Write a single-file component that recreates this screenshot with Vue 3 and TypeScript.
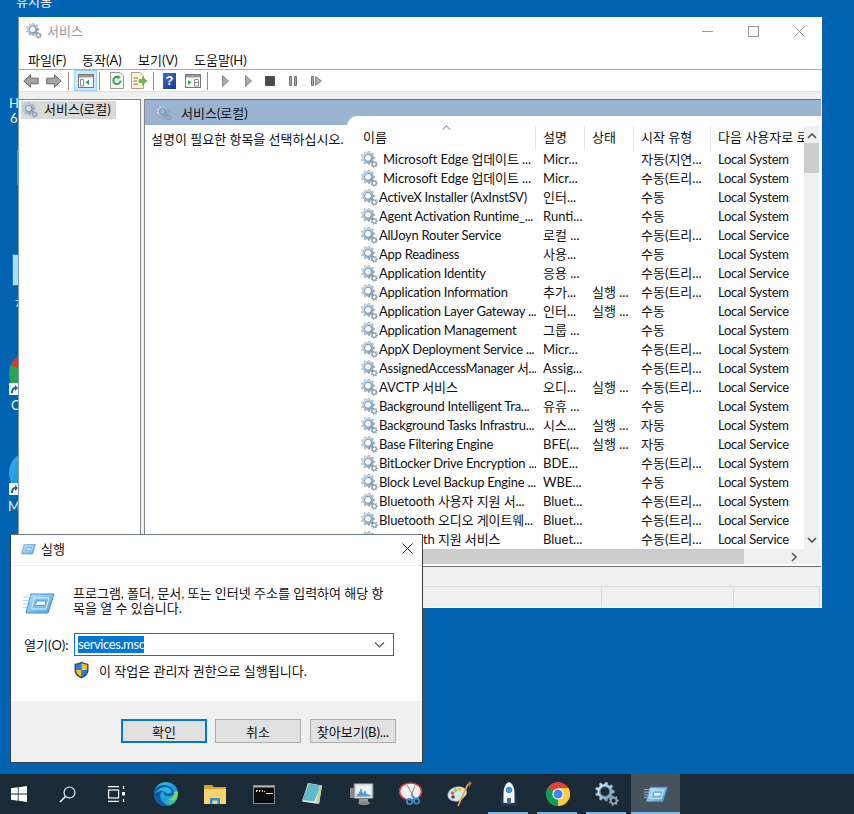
<script setup lang="ts">
interface Row {
  name: string
  desc: string
  state?: string
  start: string
  user: string
  indent?: boolean
}

const SYS = 'Local System'
const SVC = 'Local Service'
const TRIG = '수동(트리...'

const rows: Row[] = [
  { name: 'Microsoft Edge 업데이트 ...', desc: 'Micr...', start: '자동(지연...', user: SYS, indent: true },
  { name: 'Microsoft Edge 업데이트 ...', desc: 'Micr...', start: TRIG, user: SYS, indent: true },
  { name: 'ActiveX Installer (AxInstSV)', desc: '인터...', start: '수동', user: SYS },
  { name: 'Agent Activation Runtime_...', desc: 'Runti...', start: '수동', user: SYS },
  { name: 'AllJoyn Router Service', desc: '로컬 ...', start: TRIG, user: SVC },
  { name: 'App Readiness', desc: '사용...', start: '수동', user: SYS },
  { name: 'Application Identity', desc: '응용 ...', start: TRIG, user: SVC },
  { name: 'Application Information', desc: '추가...', state: '실행 ...', start: TRIG, user: SYS },
  { name: 'Application Layer Gateway ...', desc: '인터...', state: '실행 ...', start: '수동', user: SVC },
  { name: 'Application Management', desc: '그룹 ...', start: '수동', user: SYS },
  { name: 'AppX Deployment Service ...', desc: 'Micr...', start: TRIG, user: SYS },
  { name: 'AssignedAccessManager 서...', desc: 'Assig...', start: TRIG, user: SYS },
  { name: 'AVCTP 서비스', desc: '오디...', state: '실행 ...', start: TRIG, user: SVC },
  { name: 'Background Intelligent Tra...', desc: '유휴 ...', start: '수동', user: SYS },
  { name: 'Background Tasks Infrastru...', desc: '시스...', state: '실행 ...', start: '자동', user: SYS },
  { name: 'Base Filtering Engine', desc: 'BFE(...', state: '실행 ...', start: '자동', user: SVC },
  { name: 'BitLocker Drive Encryption ...', desc: 'BDE...', start: TRIG, user: SYS },
  { name: 'Block Level Backup Engine ...', desc: 'WBE...', start: '수동', user: SYS },
  { name: 'Bluetooth 사용자 지원 서...', desc: 'Bluet...', start: TRIG, user: SYS },
  { name: 'Bluetooth 오디오 게이트웨...', desc: 'Bluet...', start: TRIG, user: SVC },
  { name: 'Bluetooth 지원 서비스', desc: 'Bluet...', start: TRIG, user: SVC },
]

const menus = ['파일(F)', '동작(A)', '보기(V)', '도움말(H)']

// latin runs come out a bit wide, hangul ones do not
function isLatin(s: string): boolean {
  return (s.match(/[\uac00-\ud7a3]/g) ?? []).length < 2
}

// toothed ring used by the services icon
function gearPath(cx: number, cy: number, r: number, teeth: number, hole: number): string {
  const pts: string[] = []
  const step = (Math.PI * 2) / teeth
  for (let i = 0; i < teeth; i++) {
    const a = i * step
    const corners: [number, number][] = [
      [a - step * 0.3, r * 0.78],
      [a - step * 0.16, r],
      [a + step * 0.16, r],
      [a + step * 0.3, r * 0.78],
    ]
    for (const [t, d] of corners) {
      pts.push(`${(cx + Math.cos(t) * d).toFixed(2)} ${(cy + Math.sin(t) * d).toFixed(2)}`)
    }
  }
  const ring = `M${cx - hole} ${cy}a${hole} ${hole} 0 1 0 ${hole * 2} 0a${hole} ${hole} 0 1 0 ${-hole * 2} 0z`
  return `M${pts.join('L')}z${ring}`
}

const bigGear = gearPath(7.4, 7.2, 7.2, 9, 3.6)
const smallGear = gearPath(14, 14, 3.8, 7, 1.5)
</script>

<template>
  <div class="desktop">
    <!-- shared icons -->
    <svg class="defs" aria-hidden="true">
      <defs>
        <linearGradient id="gearFill" x1="0" y1="0" x2="1" y2="1">
          <stop offset="0" stop-color="#e6f0f8" />
          <stop offset="0.55" stop-color="#a6c3da" />
          <stop offset="1" stop-color="#607f9c" />
        </linearGradient>
        <linearGradient id="runFill" x1="0" y1="0" x2="1" y2="1">
          <stop offset="0" stop-color="#bfe3fb" />
          <stop offset="1" stop-color="#4aa0e0" />
        </linearGradient>
        <symbol id="gears" viewBox="0 0 18 18">
          <path :d="bigGear" fill="url(#gearFill)" fill-rule="evenodd" stroke="#7b97b0" stroke-width="0.4" />
          <circle cx="7.4" cy="7.2" r="3.7" fill="none" stroke="#5d7a96" stroke-width="0.6" />
          <path :d="smallGear" fill="#8ea1b3" fill-rule="evenodd" />
        </symbol>
        <symbol id="run" viewBox="0 0 32 24">
          <path d="M8 3H31L25 22H3z" fill="url(#runFill)" stroke="#3f93d6" stroke-width="1" />
          <path d="M11.5 7H26L23 18H8.5z" fill="#7cbdee" stroke="#d9f0ff" stroke-width="1" />
          <path d="M13.5 10H23L22 14.5H12.5z" fill="#eef8ff" stroke="#3f93d6" stroke-width="0.8" />
          <path d="M0 6H7M0 9.5H6M0 13H5M0 16.5H4" stroke="#a9d6f5" stroke-width="1" />
        </symbol>
        <symbol id="link" viewBox="0 0 10 12">
          <rect width="10" height="12" fill="#f4f4f4" />
          <path d="M2 10C2 6 4 4 6 4V2L9 5L6 8V6C4.5 6 4 8 4 10z" fill="#2a5c9c" />
        </symbol>
      </defs>
    </svg>

    <!-- what shows of the desktop shortcuts -->
    <div class="desk-label recycle">휴지통</div>
    <div class="desk-label l-h">H</div>
    <div class="desk-label l-6">6</div>
    <div class="desk-sliver"></div>
    <div class="desk-note"></div>
    <div class="desk-label l-7">7</div>
    <div class="desk-chrome"></div>
    <svg class="desk-link chrome-link"><use href="#link" /></svg>
    <div class="desk-label l-c">C</div>
    <div class="desk-edge"></div>
    <svg class="desk-link edge-link"><use href="#link" /></svg>
    <div class="desk-label l-m">M</div>

    <!-- services.msc -->
    <section class="services">
      <header class="svc-title">
        <svg class="title-icon"><use href="#gears" /></svg>
        <span class="title-text">서비스</span>
        <div class="win-btns">
          <svg width="11" height="11" viewBox="0 0 11 11"><path d="M0 5.5H11" stroke="#999" /></svg>
          <svg width="11" height="11" viewBox="0 0 11 11"><rect x="0.5" y="0.5" width="10" height="10" fill="none" stroke="#999" /></svg>
          <svg width="11" height="11" viewBox="0 0 11 11"><path d="M0.5 0.5L10.5 10.5M10.5 0.5L0.5 10.5" stroke="#999" /></svg>
        </div>
      </header>

      <nav class="menubar">
        <span v-for="m in menus" :key="m">{{ m }}</span>
      </nav>

      <div class="toolbar">
        <svg class="ml0" width="16" height="14" viewBox="0 0 16 14"><path d="M7.5 0.8L0.8 7L7.5 13.2V9.8H15.2V4.2H7.5z" fill="#a4a4a4" stroke="#6a6a6a" /></svg>
        <svg class="ml7" width="16" height="14" viewBox="0 0 16 14"><path d="M8.5 0.8L15.2 7L8.5 13.2V9.8H0.8V4.2H8.5z" fill="#a4a4a4" stroke="#6a6a6a" /></svg>
        <i class="tb-sep ml6"></i>
        <div class="tb-active ml5">
          <svg width="16" height="14" viewBox="0 0 16 14">
            <rect x="0.5" y="0.5" width="15" height="13" fill="#fff" stroke="#777" />
            <rect x="1" y="1" width="14" height="2.5" fill="#9a9a9a" />
            <path d="M2.5 5.5H5.5V12H2.5z" fill="none" stroke="#8a8a8a" />
            <path d="M11 5.5V11L7.5 8.2z" fill="#2fa84f" />
          </svg>
        </div>
        <i class="tb-sep ml2"></i>
        <svg class="ml10" width="14" height="17" viewBox="0 0 14 17">
          <path d="M0.5 0.5H10L13.5 4V16.5H0.5z" fill="#f7f7f7" stroke="#9a9a9a" />
          <path d="M10.5 8.5A3.6 3.6 0 1 1 8.8 5.4" fill="none" stroke="#35a84a" stroke-width="2" />
          <path d="M7 3L10.8 5.2L7.6 7.6z" fill="#35a84a" />
        </svg>
        <svg class="ml7" width="16" height="17" viewBox="0 0 16 17">
          <path d="M0.5 0.5H9L12.5 4V16.5H0.5z" fill="#fbf3d0" stroke="#a8a08a" />
          <path d="M2.5 6H7M2.5 9H6M2.5 12H7" stroke="#777" />
          <path d="M8 7.5H11.5V5L16 9L11.5 13V10.5H8z" fill="#5fc24a" stroke="#3b9a34" stroke-width="0.5" />
        </svg>
        <i class="tb-sep ml6"></i>
        <div class="tb-help ml9">?</div>
        <svg class="ml9" width="16" height="14" viewBox="0 0 16 14">
          <rect x="0.5" y="0.5" width="15" height="13" fill="#fff" stroke="#777" />
          <rect x="1" y="1" width="14" height="2.5" fill="#9a9a9a" />
          <path d="M3 6V11L6.5 8.5z" fill="#2fa84f" />
          <path d="M9.5 5.5H13.5V12H9.5zM9.5 8.5H13.5" fill="none" stroke="#8a8a8a" />
        </svg>
        <i class="tb-sep ml6"></i>
        <svg class="ml14" width="7" height="12" viewBox="0 0 7 12"><path d="M0.5 0.5L6.5 6L0.5 11.5z" fill="#aaa" stroke="#8a8a8a" /></svg>
        <svg class="ml16" width="7" height="12" viewBox="0 0 7 12"><path d="M0.5 0.5L6.5 6L0.5 11.5z" fill="#aaa" stroke="#8a8a8a" /></svg>
        <svg class="ml13" width="10" height="10" viewBox="0 0 10 10"><rect width="10" height="10" rx="1" fill="#4a4a4a" /></svg>
        <svg class="ml14" width="8" height="10" viewBox="0 0 8 10"><path d="M0.5 0.5H2.5V9.5H0.5zM5.5 0.5H7.5V9.5H5.5z" fill="#aaa" stroke="#777" /></svg>
        <svg class="ml14" width="11" height="10" viewBox="0 0 11 10"><path d="M0.5 0.5H2.5V9.5H0.5z" fill="#aaa" stroke="#777" /><path d="M4.5 0.5L10.5 5L4.5 9.5z" fill="#aaa" stroke="#8a8a8a" /></svg>
      </div>

      <div class="panes">
        <aside class="tree">
          <div class="tree-item">
            <svg class="gear16"><use href="#gears" /></svg>
            <span>서비스(로컬)</span>
          </div>
        </aside>

        <div class="detail">
          <div class="band">
            <svg class="gear16"><use href="#gears" /></svg>
            <span>서비스(로컬)</span>
          </div>
          <div class="detail-body">
            <p class="hint">설명이 필요한 항목을 선택하십시오.</p>
            <div class="list">
              <div class="list-main">
                <div class="table">
                  <div class="thead">
                    <span class="sort"></span>
                    <div class="c-name">이름</div>
                    <div class="c-desc">설명</div>
                    <div class="c-state">상태</div>
                    <div class="c-start">시작 유형</div>
                    <div class="c-user">다음 사용자로 로그온</div>
                  </div>
                  <div v-for="(r, i) in rows" :key="i" class="row">
                    <div class="c-name" :class="{ indent: r.indent }">
                      <svg class="gear-row"><use href="#gears" /></svg>
                      <span :class="{ latin: isLatin(r.name) }">{{ r.name }}</span>
                    </div>
                    <div class="c-desc">{{ r.desc }}</div>
                    <div class="c-state">{{ r.state }}</div>
                    <div class="c-start">{{ r.start }}</div>
                    <div class="c-user">{{ r.user }}</div>
                  </div>
                </div>
                <div class="vscroll">
                  <svg width="10" height="6" viewBox="0 0 10 6"><path d="M1 5L5 1L9 5" fill="none" stroke="#505050" stroke-width="1.6" /></svg>
                  <div class="vthumb"></div>
                  <svg width="10" height="6" viewBox="0 0 10 6"><path d="M1 1L5 5L9 1" fill="none" stroke="#505050" stroke-width="1.6" /></svg>
                </div>
              </div>
              <div class="hscroll">
                <div class="hthumb"></div>
                <svg width="6" height="10" viewBox="0 0 6 10"><path d="M1 1L5 5L1 9" fill="none" stroke="#606060" stroke-width="1.6" /></svg>
              </div>
            </div>
          </div>
        </div>
      </div>

      <div class="pane-foot"></div>
      <footer class="statusbar">
        <i></i><i></i><i></i>
      </footer>
    </section>

    <!-- run dialog -->
    <section class="run">
      <header class="run-title">
        <svg class="run-small"><use href="#run" /></svg>
        <span>실행</span>
        <svg class="run-close" width="11" height="11" viewBox="0 0 11 11"><path d="M0.5 0.5L10.5 10.5M10.5 0.5L0.5 10.5" stroke="#222" stroke-width="1" /></svg>
      </header>
      <div class="run-body">
        <div class="run-intro">
          <svg class="run-big"><use href="#run" /></svg>
          <p>프로그램, 폴더, 문서, 또는 인터넷 주소를 입력하여 해당 항<br />목을 열 수 있습니다.</p>
        </div>
        <div class="run-open">
          <label>열기(O):</label>
          <div class="combo">
            <span class="sel">services.msc</span>
            <svg width="11" height="6" viewBox="0 0 11 6"><path d="M1 0.5L5.5 5L10 0.5" fill="none" stroke="#555" stroke-width="1.1" /></svg>
          </div>
        </div>
        <div class="run-admin">
          <svg width="15" height="18" viewBox="0 0 15 18">
            <path d="M7.5 0.5C5.5 2 3 2.6 0.5 2.7V9C0.5 13 3.5 16 7.5 17.5C11.5 16 14.5 13 14.5 9V2.7C12 2.6 9.5 2 7.5 0.5z" fill="#3d4a5a" />
            <path d="M7.5 2C6 3 4 3.6 2 3.8V9H7.5z" fill="#2a7fd6" />
            <path d="M7.5 2C9 3 11 3.6 13 3.8V9H7.5z" fill="#f5c32c" />
            <path d="M2 9H7.5V15.8C4.5 14.5 2 12.2 2 9z" fill="#f5c32c" />
            <path d="M13 9H7.5V15.8C10.5 14.5 13 12.2 13 9z" fill="#2a7fd6" />
          </svg>
          <span>이 작업은 관리자 권한으로 실행됩니다.</span>
        </div>
      </div>
      <footer class="run-foot">
        <button class="primary">확인</button>
        <button>취소</button>
        <button>찾아보기(B)...</button>
      </footer>
    </section>

    <!-- taskbar -->
    <div class="taskbar">
      <div class="slot">
        <svg width="16" height="16" viewBox="0 0 16 16"><path d="M0 2.3L6.8 1.3V7.6H0zM7.6 1.2L16 0V7.6H7.6zM0 8.4H6.8V14.7L0 13.7zM7.6 8.4H16V16L7.6 14.8z" fill="#fff" /></svg>
      </div>
      <div class="slot">
        <svg width="17" height="17" viewBox="0 0 17 17"><circle cx="10.5" cy="6.5" r="5.5" fill="none" stroke="#fff" stroke-width="1.1" /><path d="M6.5 10.5L1 16" stroke="#fff" stroke-width="1.4" /></svg>
      </div>
      <div class="slot">
        <svg width="17" height="16" viewBox="0 0 17 16" fill="none" stroke="#fff" stroke-width="1.2"><path d="M0 0.6H11M0 15.4H11" /><rect x="0.6" y="4" width="10" height="8" /><path d="M15.5 0V3M15.5 13V16" /><rect x="14" y="6" width="3" height="3.5" fill="#fff" stroke="none" /></svg>
      </div>
      <div class="slot">
        <svg width="24" height="24" viewBox="0 0 24 24">
          <defs>
            <linearGradient id="edgeA" x1="0" y1="0" x2="1" y2="1"><stop offset="0" stop-color="#35c1f1" /><stop offset="0.6" stop-color="#1d9fd8" /><stop offset="1" stop-color="#5fd08a" /></linearGradient>
          </defs>
          <circle cx="12" cy="12" r="12" fill="url(#edgeA)" />
          <path d="M0 12C0 6 5 3 10 3C15 3 19 6 20 10C20.5 13 17 14 14 14C10 14 9 11 10 9C6 10 5 15 8 19C10 22 14 24 17 22.7C14 24.5 10 24.5 6.5 22.5C2.5 20.3 0 16.5 0 12z" fill="#0c59a4" />
          <path d="M10 9C11 11 13 11.5 15 11.5C17 11.5 18 10.5 17.5 9C16 5.5 11 4 7 6C4 7.5 2 9.5 1 12C3 9.5 6.5 8 10 9z" fill="#2cb5e8" />
          <path d="M20 10C21 14 18 17 14 17C16 19 20 19 22 17C24 14.5 24 11 23 9z" fill="#76d96b" />
        </svg>
      </div>
      <div class="slot">
        <svg width="22" height="20" viewBox="0 0 22 20">
          <path d="M0 1H8L10 3H22V20H0z" fill="#d9a12e" />
          <rect y="5" width="22" height="15" fill="#f8d26a" />
          <path d="M6 14H16V20H13.5V16.5H8.5V20H6z" fill="#2f8fd9" />
        </svg>
      </div>
      <div class="slot">
        <svg width="22" height="19" viewBox="0 0 22 19">
          <rect x="0.5" y="0.5" width="21" height="18" fill="#0c0c0c" stroke="#8a8a8a" />
          <rect x="1" y="1" width="20" height="1.5" fill="#b5b5b5" />
          <path d="M3 5H5V6H3zM3 6H4V7H3zM6 5H7V7H6zM9 5H10V7H9zM11 6H12V7H11zM13 8H20V9H13z" fill="#d8d8d8" />
        </svg>
      </div>
      <div class="slot">
        <svg width="23" height="24" viewBox="0 0 23 24">
          <path d="M7 1L21 3.5L18 22L1 19.5z" fill="#e9edd9" />
          <path d="M8 1.5L20 3.5L13 19.5L1 18z" fill="#5fb9c9" />
          <path d="M18 4L21 3.5L18 22L15 21.5z" fill="#c5c9a4" />
        </svg>
      </div>
      <div class="slot">
        <svg width="24" height="24" viewBox="0 0 24 24">
          <rect x="0" y="6" width="6" height="10" fill="#8c8c8c" />
          <rect x="4" y="1.5" width="19" height="15" rx="1" fill="#d5d5d5" stroke="#777" />
          <rect x="6" y="3.5" width="15" height="11" fill="#e9f2f9" />
          <path d="M6.5 13L9 11L11 6L13 12L15 8L16.5 12L20.5 13V14.5H6.5z" fill="#4f9bd0" />
          <path d="M9 17H18V20H9z" fill="#9a9a9a" /><ellipse cx="14" cy="21" rx="6" ry="2" fill="#888" />
        </svg>
      </div>
      <div class="slot">
        <svg width="24" height="24" viewBox="0 0 24 24">
          <ellipse cx="11.5" cy="9.5" rx="11" ry="8.5" fill="#f2efec" stroke="#c8414e" stroke-width="1.6" />
          <path d="M8 3L15 15M16 3.5L12 14" stroke="#888" stroke-width="1" />
          <circle cx="17.5" cy="19" r="2.6" fill="none" stroke="#2f8fd9" stroke-width="1.8" />
          <circle cx="10.5" cy="19.5" r="2.6" fill="none" stroke="#2f8fd9" stroke-width="1.8" />
          <path d="M13 14L16 17" stroke="#2f8fd9" stroke-width="1.8" />
        </svg>
      </div>
      <div class="slot">
        <svg width="25" height="26" viewBox="0 0 25 26">
          <path d="M1 13C2 8 8 5 14 6C20 7 21 12 18 15C14 19 13 21 7 20C3 19.5 0 17 1 13z" fill="#dbe6ec" stroke="#9fb3bf" stroke-width="0.6" />
          <circle cx="5.5" cy="12" r="1.8" fill="#d65b5b" /><circle cx="8.5" cy="9" r="1.8" fill="#7fc86d" /><circle cx="12.5" cy="8.5" r="1.8" fill="#f1bb3c" /><circle cx="6" cy="16" r="1.8" fill="#4a4a4a" />
          <path d="M11 25L21 3" stroke="#e7a24a" stroke-width="1.8" /><path d="M20 5L22 0.5L25 2L22.5 5.5z" fill="#a87b4f" />
        </svg>
      </div>
      <div class="slot running">
        <svg width="18" height="26" viewBox="0 0 18 26">
          <path d="M1 25C-0.5 20 1 15 4 12L14 12C17 15 18.5 20 17 25z" fill="#0f3f6c" opacity="0.7" />
          <path d="M9 1C6 2 3.5 6 3.5 12V22H14.5V12C14.5 6 12 2 9 1z" fill="#f2f4f6" />
          <circle cx="9" cy="9" r="2.8" fill="#38a4dc" stroke="#0d5f96" stroke-width="0.6" />
          <rect x="7" y="17" width="4" height="6" fill="#4d6577" />
        </svg>
      </div>
      <div class="slot running">
        <svg width="24" height="24" viewBox="0 0 24 24">
          <circle cx="12" cy="12" r="12" fill="#db4437" />
          <path d="M12 12L1.6 6A12 12 0 0 0 12 24z" fill="#0f9d58" />
          <path d="M12 12L12 24A12 12 0 0 0 22.4 6H12z" fill="#ffcd40" />
          <circle cx="12" cy="12" r="5.6" fill="#fff" />
          <circle cx="12" cy="12" r="4.5" fill="#4285f4" />
        </svg>
      </div>
      <div class="slot running">
        <svg width="24" height="24" class="task-gears"><use href="#gears" /></svg>
      </div>
      <div class="slot running active">
        <svg width="24" height="18"><use href="#run" /></svg>
      </div>
    </div>
  </div>
</template>

<style scoped>
.desktop {
  position: relative;
  width: 854px;
  height: 814px;
  overflow: hidden;
  display: flex;
  flex-direction: column;
  justify-content: flex-end;
  background: #0063b1;
  font-family: Lato, "Noto Sans CJK KR", sans-serif;
  font-size: 13px;
  color: #111;
}

.defs {
  position: absolute;
  width: 0;
  height: 0;
}

/* desktop leftovers */
.desk-label {
  position: absolute;
  color: #f2f8fc;
  line-height: 13px;
}
.recycle { left: 16px; top: -5px; }
.l-h { left: 9px; top: 97px; }
.l-6 { left: 10px; top: 112px; }
.l-7 { left: 15px; top: 297px; font-size: 9px; }
.l-c { left: 11px; top: 399px; }
.l-m { left: 8px; top: 500px; }
.desk-sliver {
  position: absolute;
  left: 17px;
  top: 150px;
  width: 1px;
  height: 35px;
  background: #5d8db5;
}
.desk-note {
  position: absolute;
  left: 12px;
  top: 254px;
  width: 5px;
  height: 30px;
  background: #a9def5;
  border: 1px solid #2a7fb6;
  border-right: none;
}
.desk-chrome {
  position: absolute;
  left: 9px;
  top: 353px;
  width: 36px;
  height: 42px;
  border-radius: 50%;
  background: conic-gradient(#2da44e 0 300deg, #d8382c 300deg 360deg);
}
.desk-edge {
  position: absolute;
  left: 9px;
  top: 453px;
  width: 36px;
  height: 40px;
  border-radius: 50%;
  background: linear-gradient(120deg, #35b4ee, #0a6fc2);
}
.desk-link {
  position: absolute;
  left: 9px;
  width: 10px;
  height: 12px;
}
.chrome-link { top: 383px; }
.edge-link { top: 483px; }

/* services window */
.services {
  position: absolute;
  left: 18px;
  top: 17px;
  width: 804px;
  height: 591px;
  box-sizing: border-box;
  display: flex;
  flex-direction: column;
  background: #fff;
  border-left: 1px solid #8d9aa5;
}
.svc-title {
  height: 35px;
  flex: none;
  box-sizing: border-box;
  display: flex;
  align-items: center;
  padding: 0 0 7px 7px;
}
.title-icon {
  width: 16px;
  height: 16px;
}
.title-text {
  margin-left: 5px;
  margin-bottom: 2px;
  color: #9a9a9a;
}
.win-btns {
  margin-left: auto;
  margin-right: 17px;
  display: flex;
  gap: 35px;
}
.menubar {
  height: 17px;
  flex: none;
  box-sizing: border-box;
  display: grid;
  grid-template-columns: 54px 56px 56px auto;
  align-items: center;
  padding: 0 0 6px 9px;
  line-height: 17px;
}
.toolbar {
  box-sizing: border-box;
  height: 23px;
  flex: none;
  display: flex;
  align-items: center;
  padding-left: 4px;
  border-top: 1px solid #a9a9a9;
  border-bottom: 1px solid #e0e0e0;
}
.ml0 { margin-left: 0; }
.ml2 { margin-left: 2px; }
.ml5 { margin-left: 5px; }
.ml6 { margin-left: 6px; }
.ml7 { margin-left: 7px; }
.ml9 { margin-left: 9px; }
.ml10 { margin-left: 10px; }
.ml13 { margin-left: 13px; }
.ml14 { margin-left: 14px; }
.ml16 { margin-left: 16px; }
.tb-sep {
  display: block;
  width: 1px;
  height: 18px;
  background: #8f8f8f;
}
.tb-active {
  box-sizing: border-box;
  width: 23px;
  height: 21px;
  display: flex;
  align-items: center;
  justify-content: center;
  background: #cce8ff;
  border: 1px solid #99d1ff;
}
.tb-help {
  width: 13px;
  height: 16px;
  background: linear-gradient(135deg, #3a6ad0, #1c3a94);
  color: #fff;
  font: bold 13px/16px "Liberation Sans", sans-serif;
  text-align: center;
}

.panes {
  height: 475px;
  flex: none;
  display: flex;
  gap: 3px;
  background: #f0f0f0;
  padding-top: 7px;
  box-sizing: border-box;
}
.tree {
  box-sizing: border-box;
  width: 122px;
  background: #fff;
  border-top: 1px solid #828790;
  border-right: 1px solid #828790;
  padding: 1px 0 0 2px;
  display: flex;
  flex-direction: column;
  align-items: flex-start;
}
.tree-item {
  width: 95px;
  height: 18px;
  flex: none;
  display: flex;
  align-items: center;
  gap: 6px;
  background: #d9d9d9;
  padding-left: 1px;
  box-sizing: border-box;
  line-height: 15px;
}
.tree-item span {
  margin-bottom: 2px;
}
.gear16 {
  width: 16px;
  height: 16px;
  flex: none;
}
.detail {
  flex: none;
  width: 677px;
  box-sizing: border-box;
  background: #fff;
  border-top: 1px solid #6e6e6e;
  border-left: 1px solid #828790;
  border-bottom: 1px solid #6e6e6e;
  display: flex;
  flex-direction: column;
}
.band {
  height: 25px;
  flex: none;
  display: flex;
  align-items: center;
  gap: 9px;
  padding-left: 11px;
  background: #9ab3d1;
}
.detail-body {
  flex: 1;
  min-height: 0;
  display: flex;
}
.hint {
  margin: 5px 0 0;
  padding-left: 6px;
  width: 202px;
  flex: none;
  box-sizing: border-box;
  line-height: 18px;
  white-space: nowrap;
}
.list {
  flex: 1;
  margin-top: -9px;
  background: #fff;
  border-top-left-radius: 10px;
  display: flex;
  flex-direction: column;
  min-width: 0;
  position: relative;
}
.list-main {
  height: 433px;
  flex: none;
  display: flex;
}
.table {
  width: 457px;
  flex: none;
  overflow: hidden;
  padding-top: 10px;
  box-sizing: border-box;
}
.thead,
.row {
  display: grid;
  grid-template-columns: 189px 49px 49px 77px 93px;
  white-space: nowrap;
}
.thead {
  height: 24px;
  position: relative;
  line-height: 22px;
}
.thead > div {
  padding-left: 7px;
  border-right: 1px solid #e5e5e5;
  overflow: hidden;
}
.thead .c-name {
  padding-left: 16px;
}
.thead .c-user {
  border-right: none;
}
.sort {
  position: absolute;
  left: 96px;
  top: 0;
  width: 6px;
  height: 6px;
  border-left: 1px solid #8a8a8a;
  border-top: 1px solid #8a8a8a;
  transform: rotate(45deg) scale(0.85);
}
.row {
  height: 19px;
  line-height: 19px;
}
.row > div {
  padding-left: 7px;
  overflow: hidden;
}
.row .c-name {
  display: flex;
  align-items: center;
  padding-left: 14px;
}
.row .c-name span {
  margin-left: 1px;
  letter-spacing: -0.1px;
}
.row .c-name span.latin {
  letter-spacing: -0.25px;
}
.row .c-name.indent span {
  margin-left: 5px;
}
.row .c-user {
  letter-spacing: -0.25px;
}
.gear-row {
  width: 17px;
  height: 17px;
  flex: none;
}
.vscroll {
  flex: none;
  width: 15px;
  margin-top: 10px;
  background: #f0f0f0;
  display: flex;
  flex-direction: column;
  align-items: center;
  padding: 7px 0 6px;
  box-sizing: border-box;
}
.vthumb {
  width: 15px;
  height: 30px;
  background: #cdcdcd;
  margin-top: 4px;
  margin-bottom: auto;
}
.hscroll {
  height: 15px;
  flex: none;
  margin-left: -203px;
  background: #f0f0f0;
  display: flex;
  align-items: center;
  width: 676px;
  position: relative;
}
.hthumb {
  width: 600px;
  height: 15px;
  background: #cdcdcd;
}
.hscroll svg {
  margin-left: 47px;
}
.pane-foot {
  height: 19px;
  flex: none;
  background: #f0f0f0;
}
.statusbar {
  height: 21px;
  flex: none;
  box-sizing: border-box;
  background: #f0f0f0;
  border-top: 1px solid #d9d9d9;
  display: grid;
  grid-template-columns: 583px 132px 86px;
}
.statusbar i {
  display: block;
  border-right: 1px solid #d9d9d9;
}

/* run dialog */
.run {
  position: absolute;
  left: 10px;
  top: 534px;
  width: 413px;
  height: 229px;
  box-sizing: border-box;
  display: flex;
  flex-direction: column;
  background: #fff;
  border: 1px solid #3a3f44;
  border-top-color: #6f7a84;
}
.run-title {
  height: 31px;
  flex: none;
  box-sizing: border-box;
  display: flex;
  align-items: center;
  padding: 0 0 3px 9px;
  gap: 5px;
  border-bottom: 1px solid #eeeeee;
}
.run-small {
  width: 16px;
  height: 12px;
}
.run-close {
  margin-left: auto;
  margin-right: 9px;
}
.run-body {
  flex: 1;
  min-height: 0;
}
.run-intro {
  display: flex;
  padding-top: 20px;
}
.run-big {
  width: 32px;
  height: 24px;
  margin: 5px 0 0 12px;
  flex: none;
}
.run-intro p {
  margin: 0 0 0 18px;
  line-height: 15px;
  white-space: nowrap;
}
.run-open {
  display: flex;
  align-items: center;
  margin-top: 17px;
  padding-left: 13px;
}
.run-open label {
  width: 50px;
}
.combo {
  box-sizing: border-box;
  width: 320px;
  height: 23px;
  border: 1px solid #0078d7;
  display: flex;
  align-items: center;
  padding: 0 8px 0 3px;
  justify-content: space-between;
}
.sel {
  background: #0078d7;
  color: #fff;
  line-height: 17px;
  letter-spacing: -0.4px;
}
.run-admin {
  display: flex;
  align-items: center;
  gap: 10px;
  margin: 5px 0 0 63px;
  height: 18px;
}
.run-foot {
  height: 61px;
  flex: none;
  background: #f0f0f0;
  display: flex;
  gap: 8px;
  padding: 18px 0 0 110px;
  box-sizing: border-box;
}
.run-foot button {
  box-sizing: border-box;
  width: 86px;
  height: 24px;
  margin: 0;
  padding: 0;
  background: #e1e1e1;
  border: 1px solid #adadad;
  font: inherit;
  color: #111;
}
.run-foot button.primary {
  border: 2px solid #0078d7;
}
.run-foot button:last-child {
  margin-left: 1px;
}

/* taskbar */
.taskbar {
  height: 40px;
  flex: none;
  display: flex;
  background: #1b2a37;
  position: relative;
}
.slot {
  position: relative;
  width: 49px;
  flex: none;
  display: flex;
  align-items: center;
  justify-content: center;
}
.slot:first-child {
  margin-left: -6px;
}
.running::after {
  content: "";
  position: absolute;
  left: 4px;
  right: 5px;
  bottom: 0;
  height: 2px;
  background: #76b9ed;
}
.active {
  background: #46525c;
}
.active::after {
  left: 0;
  right: 0;
}
.task-gears {
  width: 24px;
  height: 24px;
}
</style>

<style>
html,
body {
  margin: 0;
  overflow: hidden;
}
</style>
